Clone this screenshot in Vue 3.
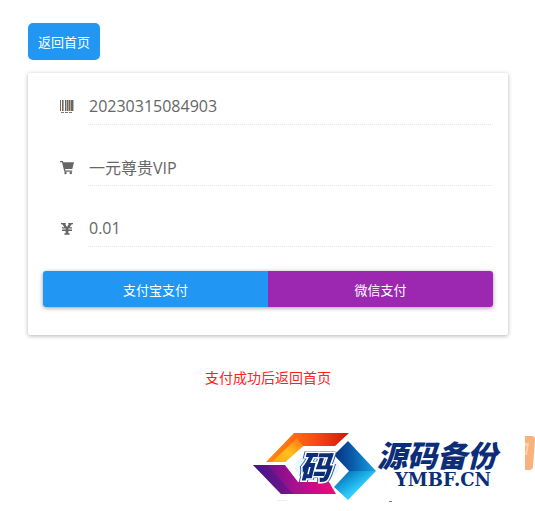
<template>
  <div class="page">
    <button type="button" class="back">返回首页</button>

    <form class="card" @submit.prevent>
      <div class="row">
        <label for="order" aria-label="订单号">
          <svg class="icon" viewBox="0 0 14 14" shape-rendering="crispEdges">
            <path d="M0 0h1v11H0zM2 0h1v11H2zM5 0h1v11H5zM7 0h1v11H7zM9 0h1v11H9zM11 0h2v11h-2z" fill="#666" />
            <path d="M3 0h1v11H3zM8 0h1v11H8zM10 0h1v11h-1z" fill="#c9a27c" />
            <path d="M6 0h1v11H6zM13 0h1v11h-1z" fill="#a9bccb" />
            <path d="M1 12h3v1H1zM5 12h3v1H5zM9 12h3v1H9z" fill="#777" />
          </svg>
        </label>
        <input id="order" v-model="order.id" type="text" readonly />
      </div>
      <div class="row">
        <label for="goods" aria-label="商品">
          <svg class="icon" viewBox="0 0 14 14">
            <path d="M0 0h2.8l.6 1.3H14L12.3 8H5l.4 1.6h6.8v1.2H4.3L2 1.3H0z" fill="#666" />
            <circle cx="5.5" cy="12" r="1.2" fill="#666" />
            <circle cx="10.8" cy="12" r="1.2" fill="#666" />
          </svg>
        </label>
        <input id="goods" v-model="order.name" type="text" readonly />
      </div>
      <div class="row">
        <label for="money" aria-label="金额">
          <svg class="icon" viewBox="0 0 14 14">
            <path
              d="M1 1h4.8v1.3h-.6L7 5l1.8-2.7h-.6V1H13v1.3h-1.3L9.6 5.2H12v1.4H8.4v1H12V9H8.4v2.3h1.2v1.4H4.4v-1.4h1.2V9H2V7.6h3.6v-1H2V5.2h2.4L2.3 2.3H1z"
              fill="#666"
            />
          </svg>
        </label>
        <input id="money" v-model="order.money" type="text" readonly />
      </div>

      <div class="pay">
        <button type="button" class="alipay">支付宝支付</button>
        <button type="button" class="wechat">微信支付</button>
      </div>
    </form>

    <p class="tip">支付成功后返回首页</p>
  </div>

  <div class="footer">
    <svg class="logo" viewBox="0 0 252 72" role="img" aria-label="源码备份 YMBF.CN">
      <defs>
        <linearGradient id="fire" x1="0" y1="0" x2="1" y2="0">
          <stop offset="0" stop-color="#ff8a12" />
          <stop offset="0.35" stop-color="#ff6a14" />
          <stop offset="0.6" stop-color="#f84a16" />
          <stop offset="1" stop-color="#cf1606" />
        </linearGradient>
        <linearGradient id="amber" x1="0" y1="1" x2="0.8" y2="0">
          <stop offset="0" stop-color="#ffa812" />
          <stop offset="0.5" stop-color="#ffc01c" />
          <stop offset="1" stop-color="#ff7a14" />
        </linearGradient>
        <linearGradient id="violet" x1="0" y1="0" x2="1" y2="0">
          <stop offset="0" stop-color="#4a1585" />
          <stop offset="0.5" stop-color="#a80f90" />
          <stop offset="1" stop-color="#f20a78" />
        </linearGradient>
        <linearGradient id="navy" x1="0" y1="0" x2="1" y2="0">
          <stop offset="0" stop-color="#06327f" />
          <stop offset="0.45" stop-color="#0a5cab" />
          <stop offset="1" stop-color="#16a5e4" />
        </linearGradient>
        <linearGradient id="sky" x1="0" y1="0" x2="0.6" y2="0.6">
          <stop offset="0" stop-color="#0a4f9c" />
          <stop offset="0.6" stop-color="#14a0dc" />
          <stop offset="1" stop-color="#32cdfb" />
        </linearGradient>
      </defs>
      <path d="M13 29 41 0H96L82 13H50L32 29z" fill="url(#fire)" />
      <path d="M19 29 44 5 50 13 32 29z" fill="url(#amber)" />
      <path d="M0 32H32L45 49H76L83 61H28z" fill="url(#violet)" />
      <path d="M0 32H14L40 61H28z" fill="#2f1a8a" opacity="0.35" />
      <path d="M95 8 123 38H96L81 22z" fill="url(#navy)" />
      <path d="M96 38H123L95 67 81 54z" fill="url(#sky)" />
      <ellipse cx="64" cy="34" rx="22" ry="14" fill="#e9f8fc" />
      <text x="46" y="46" class="emblem">码</text>
      <text x="124" y="34" class="brand">源码备份</text>
      <text x="142" y="53" class="domain">YMBF.CN</text>
      <path d="M24 67h10v1H24z" fill="#eee" />
      <path d="M136 68h3v1h-3z" fill="#777" />
    </svg>
    <svg class="badge" viewBox="0 0 10 34">
      <path d="M0 0h7q3 0 3 4L8 30q0 4-4 4H0z" fill="#f9b27c" />
      <path d="M0 7h4l-2 12H0l2-9H0z" fill="#fcd3b4" />
    </svg>
  </div>
</template>

<script setup>
import { reactive } from 'vue'

const order = reactive({
  id: '20230315084903',
  name: '一元尊贵VIP',
  money: '0.01'
})
</script>

<style>
body {
  margin: 0;
  background: #fff;
}
</style>

<style scoped>
.page,
.footer,
button,
input {
  font-family: "Open Sans", "Noto Sans CJK SC", sans-serif;
}

.page {
  padding: 23px 27px 0 28px;
}

button {
  border: none;
  color: #fff;
  font-size: 13px;
  cursor: pointer;
}

.back {
  display: block;
  height: 37px;
  padding: 0 10px;
  border-radius: 5px;
  background: #2196f3;
}

.card {
  margin-top: 13px;
  padding: 15px 15px 28px;
  border-radius: 2px;
  box-shadow: 0 1px 4px rgba(0, 0, 0, 0.3);
}

.row {
  display: flex;
  align-items: center;
  margin-bottom: 24px;
}

.row label {
  display: flex;
  justify-content: flex-end;
  width: 31px;
  margin-right: 14px;
}

.icon {
  width: 14px;
  height: 14px;
}

.row input {
  flex: 1;
  min-width: 0;
  height: 37px;
  box-sizing: border-box;
  padding: 0 1px;
  border: none;
  border-bottom: 1px dotted #e6e6e6;
  background: transparent;
  color: #666;
  font-size: 16px;
  outline: none;
}

.pay {
  display: flex;
  border-radius: 3px;
  box-shadow: 0 1px 4px rgba(0, 0, 0, 0.4);
}

.pay button {
  flex: 1;
  height: 36px;
}

.alipay {
  border-radius: 3px 0 0 3px;
  background: #2196f3;
}

.wechat {
  border-radius: 0 3px 3px 0;
  background: #9c27b0;
}

.tip {
  margin: 32px 0 0;
  color: #ff2020;
  font-size: 14px;
  line-height: 22px;
  text-align: center;
}

.footer {
  display: flex;
  justify-content: flex-end;
  gap: 20px;
  margin-top: 44px;
}

.logo {
  width: 252px;
  height: 72px;
}

.emblem,
.brand {
  font-family: "Noto Sans CJK SC", sans-serif;
  font-weight: 900;
  font-style: italic;
  fill: #0b2e78;
}

.emblem {
  font-size: 32px;
  stroke: #fff;
  stroke-width: 3px;
  paint-order: stroke;
  filter: drop-shadow(1px 0 0 #2a5a9c) drop-shadow(-1px 0 0 #2a5a9c);
}

.brand {
  font-size: 30px;
}

.domain {
  font-family: "DejaVu Serif", serif;
  font-size: 18px;
  font-weight: bold;
  fill: #0b2e78;
}

.badge {
  width: 10px;
  height: 34px;
  margin-top: 3px;
}
</style>
